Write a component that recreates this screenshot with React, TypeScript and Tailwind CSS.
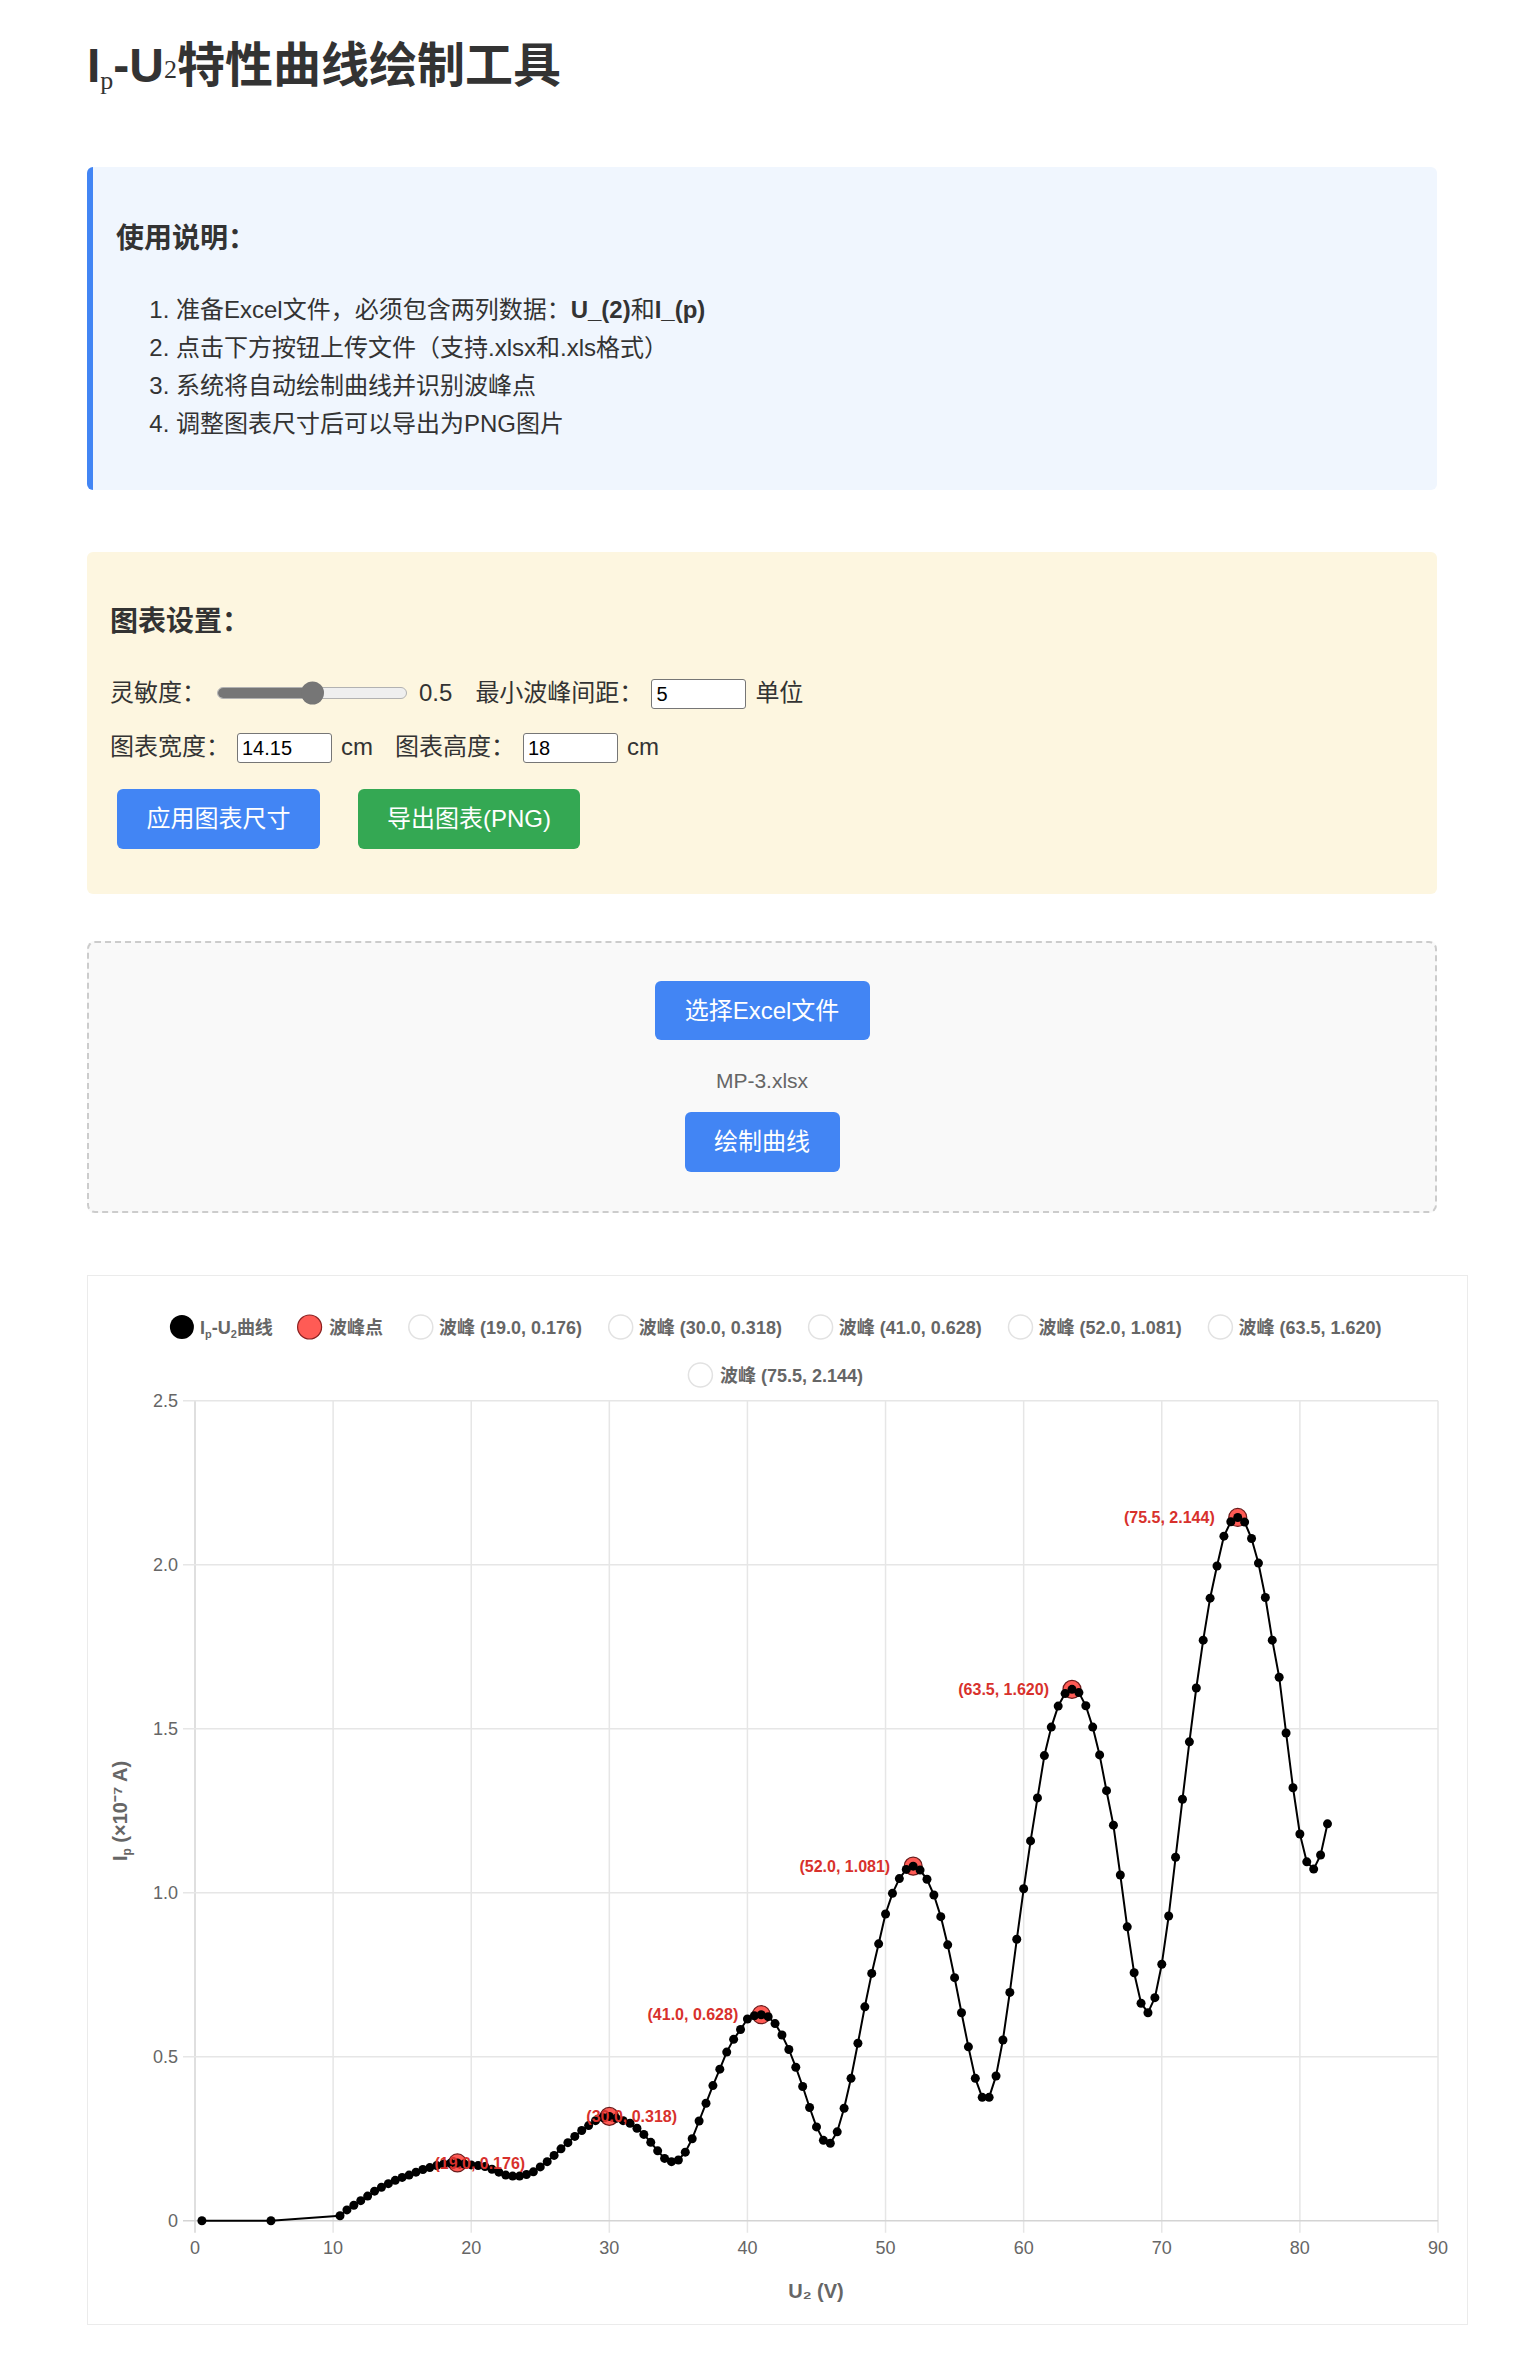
import React from 'react';

const font = "font-['Liberation_Sans','Noto_Sans_CJK_SC',sans-serif]";
const svgFont = "'Liberation Sans', 'Noto Sans CJK SC', sans-serif";

// measured curve: [U2 (V), Ip (x10^-7 A)]
const curve: [number, number][] = [
  [0.5, 0], [5.5, 0], [10.5, 0.015], [11, 0.033], [11.5, 0.047], [12, 0.061], [12.5, 0.075], [13, 0.09],
  [13.5, 0.102], [14, 0.113], [14.5, 0.123], [15, 0.132], [15.5, 0.139], [16, 0.148], [16.5, 0.156],
  [17, 0.162], [17.5, 0.168], [18, 0.173], [18.5, 0.175], [19, 0.176], [19.5, 0.173], [20, 0.17],
  [20.5, 0.168], [21, 0.165], [21.5, 0.157], [22, 0.148], [22.5, 0.139], [23, 0.136], [23.5, 0.136],
  [24, 0.141], [24.5, 0.149], [25, 0.164], [25.5, 0.18], [26, 0.199], [26.5, 0.219], [27, 0.238],
  [27.5, 0.257], [28, 0.275], [28.5, 0.29], [29, 0.305], [29.5, 0.315], [30, 0.318], [30.5, 0.312],
  [31, 0.305], [31.5, 0.297], [32, 0.282], [32.5, 0.263], [33, 0.239], [33.5, 0.213], [34, 0.19],
  [34.5, 0.18], [35, 0.185], [35.5, 0.209], [36, 0.25], [36.5, 0.304], [37, 0.358], [37.5, 0.412],
  [38, 0.462], [38.5, 0.514], [39, 0.553], [39.5, 0.583], [40, 0.615], [40.5, 0.625], [41, 0.628],
  [41.5, 0.622], [42, 0.601], [42.5, 0.566], [43, 0.522], [43.5, 0.468], [44, 0.409], [44.5, 0.345],
  [45, 0.286], [45.5, 0.245], [46, 0.236], [46.5, 0.271], [47, 0.343], [47.5, 0.434], [48, 0.541],
  [48.5, 0.652], [49, 0.754], [49.5, 0.844], [50, 0.935], [50.5, 0.998], [51, 1.043], [51.5, 1.071],
  [52, 1.081], [52.5, 1.069], [53, 1.041], [53.5, 0.993], [54, 0.927], [54.5, 0.841], [55, 0.741],
  [55.5, 0.634], [56, 0.53], [56.5, 0.434], [57, 0.376], [57.5, 0.376], [58, 0.441], [58.5, 0.551],
  [59, 0.696], [59.5, 0.858], [60, 1.012], [60.5, 1.158], [61, 1.289], [61.5, 1.418], [62, 1.505],
  [62.5, 1.569], [63, 1.607], [63.5, 1.62], [64, 1.61], [64.5, 1.57], [65, 1.505], [65.5, 1.42],
  [66, 1.311], [66.5, 1.206], [67, 1.054], [67.5, 0.896], [68, 0.756], [68.5, 0.663], [69, 0.634],
  [69.5, 0.68], [70, 0.782], [70.5, 0.929], [71, 1.108], [71.5, 1.285], [72, 1.46], [72.5, 1.624],
  [73, 1.77], [73.5, 1.898], [74, 1.996], [74.5, 2.087], [75, 2.131], [75.5, 2.144], [76, 2.13],
  [76.5, 2.08], [77, 2.005], [77.5, 1.9], [78, 1.77], [78.5, 1.657], [79, 1.487], [79.5, 1.32],
  [80, 1.179], [80.5, 1.094], [81, 1.072], [81.5, 1.115], [82, 1.21],
];

const peaks: [number, number][] = [
  [19, 0.176], [30, 0.318], [41, 0.628], [52, 1.081], [63.5, 1.62], [75.5, 2.144],
];

// plot area in page pixels
const X0 = 195;
const XS = 13.811;
const Y0 = 2220.7;
const YS = 328;
const px = (v: number) => X0 + v * XS;
const py = (v: number) => Y0 - v * YS;

const legendPeaks = [
  { cx: 420.8, tx: 439 },
  { cx: 620.7, tx: 638.8 },
  { cx: 820.6, tx: 838.7 },
  { cx: 1020.5, tx: 1038.6 },
  { cx: 1220.4, tx: 1238.5 },
  { cx: 700.4, tx: 720 },
];

function Chart() {
  const line = curve.map(([x, y]) => `${px(x).toFixed(1)},${py(y).toFixed(1)}`).join(' ');
  const xticks = [0, 10, 20, 30, 40, 50, 60, 70, 80, 90];
  const yticks = [0, 0.5, 1, 1.5, 2, 2.5];

  return (
    <svg width={1379} height={1048} viewBox="88 1276 1379 1048" style={{ fontFamily: svgFont }}>
      {/* Legend */}
      <g fontSize={18} fontWeight="bold" fill="#666">
        <circle cx={181.9} cy={1327} r={12} fill="#000" />
        <text x={200} y={1333.5}>
          <tspan>I</tspan>
          <tspan fontSize={11} dy={4}>p</tspan>
          <tspan dy={-4}>-U</tspan>
          <tspan fontSize={11} dy={4}>2</tspan>
          <tspan dy={-4}>曲线</tspan>
        </text>
        <circle cx={309.6} cy={1327} r={12} fill="#ff5b55" stroke="#8a2020" strokeWidth={1.2} />
        <text x={329} y={1333.5}>波峰点</text>
        {peaks.map(([x, y], i) => {
          const p = legendPeaks[i];
          const cy = i < 5 ? 1327 : 1375;
          return (
            <g key={x}>
              <circle cx={p.cx} cy={cy} r={12} fill="#fff" stroke="#e2e2e2" strokeWidth={1.5} />
              <text x={p.tx} y={cy + 6.5}>
                波峰 ({x.toFixed(1)}, {y.toFixed(3)})
              </text>
            </g>
          );
        })}
      </g>

      {/* Grid */}
      <g stroke="#e6e6e6" strokeWidth={1.5}>
        {xticks.map((t) => (
          <line key={t} x1={px(t)} x2={px(t)} y1={py(2.5)} y2={Y0 + 12} stroke={t === 0 ? '#d4d4d4' : '#e6e6e6'} />
        ))}
        {yticks.map((t) => (
          <line key={t} x1={X0 - 12} x2={px(90)} y1={py(t)} y2={py(t)} stroke={t === 0 ? '#d4d4d4' : '#e6e6e6'} />
        ))}
      </g>

      {/* Tick labels */}
      <g fontSize={18} fill="#666">
        {yticks.map((t) => (
          <text key={t} x={178} y={py(t) + 6.5} textAnchor="end">
            {t === 0 ? '0' : t.toFixed(1)}
          </text>
        ))}
        {xticks.map((t) => (
          <text key={t} x={px(t)} y={2253.5} textAnchor="middle">
            {t}
          </text>
        ))}
      </g>

      {/* Axis titles */}
      <text x={816} y={2298} textAnchor="middle" fontSize={20} fontWeight="bold" fill="#666">
        U₂ (V)
      </text>
      <text
        x={120}
        y={1818}
        textAnchor="middle"
        fontSize={20}
        fontWeight="bold"
        fill="#666"
        transform="rotate(-90 120 1811)"
      >
        <tspan>I</tspan>
        <tspan fontSize={12} dy={4}>p</tspan>
        <tspan dy={-4}> (×10⁻⁷ A)</tspan>
      </text>

      {/* Peak markers */}
      {peaks.map(([x, y]) => (
        <circle key={x} cx={px(x)} cy={py(y)} r={9} fill="#ff5b55" stroke="#6b1c1c" strokeWidth={1.2} />
      ))}

      {/* Curve */}
      <polyline points={line} fill="none" stroke="#000" strokeWidth={2} strokeLinejoin="round" />
      {curve.map(([x, y]) => (
        <circle key={x} cx={px(x)} cy={py(y)} r={4.5} fill="#000" />
      ))}

      {/* Peak labels */}
      <g fontSize={16} fontWeight="bold" fill="#d8312c">
        {peaks.map(([x, y]) => (
          <text key={x} x={px(x) - 23} y={py(y) + 5.7} textAnchor={x < 35 ? 'start' : 'end'}>
            ({x.toFixed(1)}, {y.toFixed(3)})
          </text>
        ))}
      </g>
    </svg>
  );
}

function NumInput({ value }: { value: string }) {
  return (
    <input
      defaultValue={value}
      className={`${font} h-[30px] w-[95px] rounded-[3px] border-[1.5px] border-[#767676] bg-white px-[4px] text-[20px] text-black outline-none`}
    />
  );
}

export default function App() {
  return (
    <div className={`${font} min-h-screen bg-white text-[#333]`}>
      <div className="ml-[87px] w-[1350px] pt-[38px] pb-[31px]">
        <h1 className="text-[48px] font-bold leading-[56px] text-[#333]">
          I<sub className="font-['Liberation_Serif',serif] text-[26px] font-normal">p</sub>-U
          <sub className="relative top-[-4px] font-['Liberation_Serif',serif] text-[26px] font-normal">2</sub>特性曲线绘制工具
        </h1>

        {/* 使用说明 */}
        <div className="mt-[73px] rounded-[6px] border-l-[6px] border-[#4285f4] bg-[#f0f6fe] pt-[55px] pb-[47px] pl-[23px]">
          <h3 className="text-[28px] font-bold leading-[34px]">使用说明：</h3>
          <ol className="mt-[35px] list-decimal pl-[60px] text-[24px] leading-[38px]">
            <li>
              准备Excel文件，必须包含两列数据：<b>U_(2)</b>和<b>I_(p)</b>
            </li>
            <li>点击下方按钮上传文件（支持.xlsx和.xls格式）</li>
            <li>系统将自动绘制曲线并识别波峰点</li>
            <li>调整图表尺寸后可以导出为PNG图片</li>
          </ol>
        </div>

        {/* 图表设置 */}
        <div className="mt-[62px] rounded-[6px] bg-[#fdf6e0] pt-[53px] pb-[45px] pl-[23px] text-[24px]">
          <h3 className="text-[28px] font-bold leading-[34px]">图表设置：</h3>
          <div className="mt-[37px] flex h-[34px] items-center">
            <span>灵敏度：</span>
            <div className="relative ml-[11px] h-[12px] w-[190px] rounded-full border border-[#b2b2b2] bg-[#efefef]">
              <div className="h-full w-1/2 rounded-full bg-[#767676]" />
              <div className="absolute left-[83px] top-1/2 h-[23px] w-[23px] -translate-y-1/2 rounded-full bg-[#767676]" />
            </div>
            <span className="ml-[12px]">0.5</span>
            <span className="ml-[23px]">最小波峰间距：</span>
            <div className="ml-[8px]">
              <NumInput value="5" />
            </div>
            <span className="ml-[9px]">单位</span>
          </div>
          <div className="mt-[20px] flex h-[34px] items-center">
            <span>图表宽度：</span>
            <div className="ml-[7px]">
              <NumInput value="14.15" />
            </div>
            <span className="ml-[9px]">cm</span>
            <span className="ml-[22px]">图表高度：</span>
            <div className="ml-[8px]">
              <NumInput value="18" />
            </div>
            <span className="ml-[9px]">cm</span>
          </div>
          <div className="mt-[25px] flex">
            <button className="ml-[7px] h-[60px] w-[203px] rounded-[6px] bg-[#4285f4] text-[24px] text-white">
              应用图表尺寸
            </button>
            <button className="ml-[38px] h-[60px] w-[222px] rounded-[6px] bg-[#34a853] text-[24px] text-white">
              导出图表(PNG)
            </button>
          </div>
        </div>

        {/* 上传 */}
        <div className="mt-[47px] flex flex-col items-center rounded-[8px] border-2 border-dashed border-[#cccccc] bg-[#f9f9f9] pt-[38px] pb-[39px]">
          <button className="h-[59px] w-[215px] rounded-[6px] bg-[#4285f4] text-[24px] text-white">
            选择Excel文件
          </button>
          <div className="mt-[26px] text-[21px] leading-[30px] text-[#666]">MP-3.xlsx</div>
          <button className="mt-[16px] h-[60px] w-[155px] rounded-[6px] bg-[#4285f4] text-[24px] text-white">
            绘制曲线
          </button>
        </div>

        {/* 图表 */}
        <div className="mt-[62px] h-[1050px] w-[1381px] border border-[#ebebeb] bg-white">
          <Chart />
        </div>
      </div>
    </div>
  );
}
